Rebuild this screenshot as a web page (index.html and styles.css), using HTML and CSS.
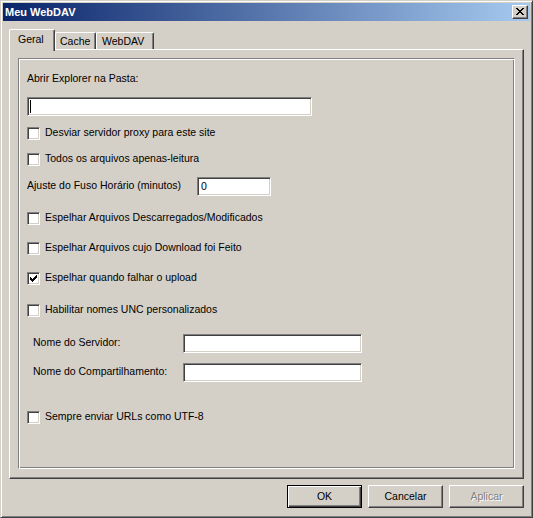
FILE: index.html
```html
<!DOCTYPE html>
<html lang="pt">
<head>
    <meta charset="UTF-8">
    <title>Meu WebDAV</title>
    <link rel="stylesheet" href="styles.css">
</head>
<body>
    <div class="window">
        <div class="titlebar">
            <span class="title">Meu WebDAV</span>
            <span class="close-btn">
                <svg width="8" height="7" viewBox="0 0 8 7"><path d="M0 0h2v1H0z M6 0h2v1H6z M1 1h2v1H1z M5 1h2v1H5z M2 2h4v1H2z M3 3h2v1H3z M2 4h4v1H2z M1 5h2v1H1z M5 5h2v1H5z M0 6h2v1H0z M6 6h2v1H6z" fill="#000"/></svg>
            </span>
        </div>

        <div class="tabs">
            <div class="tab tab-active tab-geral">Geral</div>
            <div class="tab tab-cache">Cache</div>
            <div class="tab tab-webdav">WebDAV</div>
        </div>

        <div class="panel">
            <div class="frame">
                <div class="text-row">Abrir Explorer na Pasta:</div>
                <div class="field field-path sp-12"><span class="caret"></span></div>

                <div class="check-row sp-11"><span class="checkbox"></span><span class="check-label">Desviar servidor proxy para este site</span></div>
                <div class="check-row sp-13"><span class="checkbox"></span><span class="check-label">Todos os arquivos apenas-leitura</span></div>

                <div class="field-row sp-11">
                    <span class="field-label label-fuso">Ajuste do Fuso Horário (minutos)</span>
                    <span class="field field-fuso">0</span>
                </div>

                <div class="check-row sp-16"><span class="checkbox"></span><span class="check-label">Espelhar Arquivos Descarregados/Modificados</span></div>
                <div class="check-row sp-17"><span class="checkbox"></span><span class="check-label">Espelhar Arquivos cujo Download foi Feito</span></div>
                <div class="check-row sp-17">
                    <span class="checkbox"><svg width="9" height="9" viewBox="0 0 9 9"><path d="M1 3h1v3H1z M2 4h1v3H2z M3 5h1v3H3z M4 4h1v3H4z M5 3h1v3H5z M6 2h1v3H6z M7 1h1v3H7z" fill="#000"/></svg></span>
                    <span class="check-label">Espelhar quando falhar o upload</span>
                </div>
                <div class="check-row sp-19"><span class="checkbox"></span><span class="check-label">Habilitar nomes UNC personalizados</span></div>

                <div class="field-row indent sp-17">
                    <span class="field-label label-unc">Nome do Servidor:</span>
                    <span class="field field-unc"></span>
                </div>
                <div class="field-row indent sp-10">
                    <span class="field-label label-unc">Nome do Compartilhamento:</span>
                    <span class="field field-unc"></span>
                </div>

                <div class="check-row sp-29"><span class="checkbox"></span><span class="check-label">Sempre enviar URLs como UTF-8</span></div>
            </div>
        </div>

        <div class="buttons">
            <div class="btn btn-default">OK</div>
            <div class="btn">Cancelar</div>
            <div class="btn btn-disabled">Aplicar</div>
        </div>
    </div>
</body>
</html>
```

FILE: styles.css
```css
body {
    margin: 0;
    background-color: #d4d0c8;
    font-family: "Liberation Sans", Arial, sans-serif;
    font-size: 10.5px;
    color: #000;
}
.window {
    width: 533px;
    height: 518px;
    box-sizing: border-box;
    padding: 2px;
    border: 1px solid;
    border-color: #d4d0c8 #404040 #404040 #d4d0c8;
    box-shadow: inset 1px 1px 0 #fff, inset -1px -1px 0 #808080;
    background-color: #d4d0c8;
    display: flex;
    flex-direction: column;
}

/* title bar */
.titlebar {
    height: 18px;
    display: flex;
    align-items: center;
    justify-content: space-between;
    padding: 0 2px 0 2px;
    background: linear-gradient(to right, #0a246a, #a6caf0);
}
.title {
    color: #fff;
    font-weight: bold;
    font-size: 11px;
    line-height: 13px;
}
.close-btn {
    width: 16px;
    height: 14px;
    box-sizing: border-box;
    padding: 2px 0 0 3px;
    border: 1px solid;
    border-color: #fff #404040 #404040 #fff;
    box-shadow: inset -1px -1px 0 #808080;
    background-color: #d4d0c8;
}
.close-btn svg {
    display: block;
}

/* tabs */
.tabs {
    height: 28px;
    display: flex;
    align-items: flex-end;
    padding-left: 6px;
}
.tab {
    height: 17px;
    box-sizing: border-box;
    border-left: 1px solid #fff;
    border-top: 1px solid #fff;
    border-right: 1px solid #404040;
    border-radius: 2px 2px 0 0;
    box-shadow: inset -1px 0 0 #808080;
    background-color: #d4d0c8;
    line-height: 13px;
    padding-top: 2px;
}
.tab-active {
    height: 22px;
    margin-bottom: -2px;
    padding-top: 3px;
    position: relative;
    z-index: 1;
}
.tab-geral {
    width: 46px;
    padding-left: 8px;
}
.tab-cache {
    width: 41px;
    padding-left: 4px;
}
.tab-webdav {
    width: 58px;
    padding-left: 5px;
}

/* panel */
.panel {
    height: 430px;
    margin: 0 6px;
    box-sizing: border-box;
    border: 1px solid;
    border-color: #fff #404040 #404040 #fff;
    box-shadow: inset -1px -1px 0 #808080;
    padding: 8px 8px 9px 8px;
    display: flex;
}
.frame {
    flex: 1;
    border: 1px solid;
    border-color: #808080 #fff #fff #808080;
    box-shadow: inset 1px 1px 0 #fff, inset -1px -1px 0 #808080;
    padding: 13px 8px 0 8px;
}

.text-row {
    height: 13px;
    line-height: 13px;
}
.check-row {
    height: 13px;
    display: flex;
    align-items: center;
    gap: 5px;
}
.check-label {
    line-height: 13px;
    padding-bottom: 2px;
    white-space: nowrap;
}
.checkbox {
    width: 13px;
    height: 13px;
    box-sizing: border-box;
    padding: 1px;
    border: 1px solid;
    border-color: #808080 #fff #fff #808080;
    box-shadow: inset 1px 1px 0 #404040, inset -1px -1px 0 #d4d0c8;
    background-color: #fff;
}
.checkbox svg {
    display: block;
}

.field-row {
    height: 19px;
    display: flex;
    align-items: center;
}
.indent {
    padding-left: 6px;
}
.field-label {
    line-height: 13px;
    padding-bottom: 2px;
    white-space: nowrap;
}
.label-fuso {
    width: 170px;
}
.label-unc {
    width: 150px;
}
.field {
    height: 19px;
    box-sizing: border-box;
    border: 1px solid;
    border-color: #808080 #fff #fff #808080;
    box-shadow: inset 1px 1px 0 #404040, inset -1px -1px 0 #d4d0c8;
    background-color: #fff;
    display: flex;
    align-items: center;
    padding-left: 3px;
    line-height: 13px;
}
.field-path {
    width: 285px;
    padding-left: 2px;
}
.caret {
    width: 1px;
    height: 13px;
    background-color: #000;
}
.field-fuso {
    width: 74px;
}
.field-unc {
    width: 179px;
}

.sp-10 { margin-top: 10px; }
.sp-11 { margin-top: 11px; }
.sp-12 { margin-top: 12px; }
.sp-13 { margin-top: 13px; }
.sp-16 { margin-top: 16px; }
.sp-17 { margin-top: 17px; }
.sp-19 { margin-top: 19px; }
.sp-29 { margin-top: 29px; }

/* bottom buttons */
.buttons {
    display: flex;
    justify-content: flex-end;
    gap: 6px;
    margin-top: 6px;
    padding-right: 6px;
}
.btn {
    width: 75px;
    height: 23px;
    box-sizing: border-box;
    border: 1px solid;
    border-color: #fff #404040 #404040 #fff;
    box-shadow: inset -1px -1px 0 #808080;
    display: flex;
    align-items: center;
    justify-content: center;
    line-height: 13px;
    padding-bottom: 1px;
}
.btn-default {
    border-color: #000;
    box-shadow: inset 1px 1px 0 #fff, inset -1px -1px 0 #404040, inset -2px -2px 0 #808080;
}
.btn-disabled {
    color: #808080;
    text-shadow: 1px 1px 0 #fff;
}
```
